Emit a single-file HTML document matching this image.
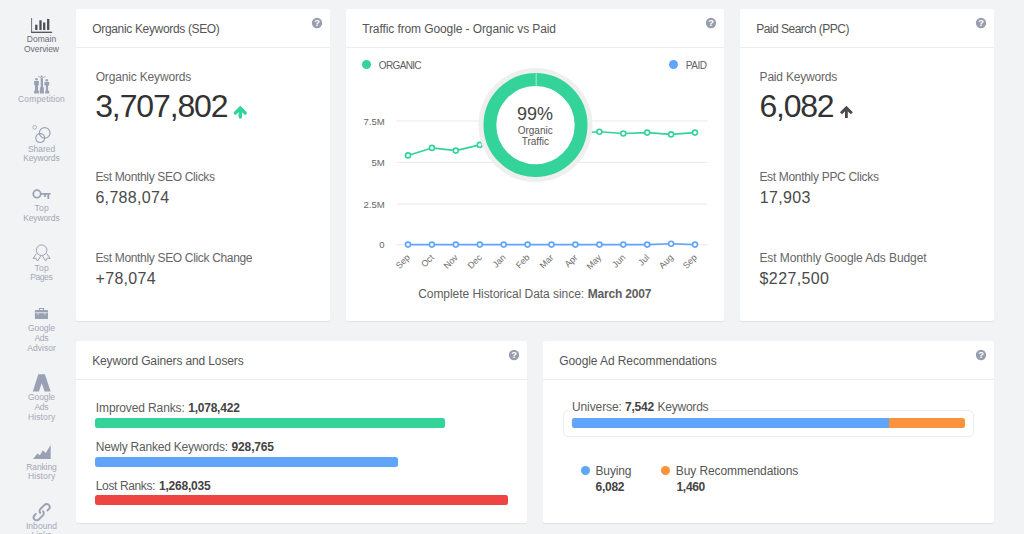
<!DOCTYPE html>
<html lang="en"><head><meta charset="utf-8"><title>Domain Overview</title>
<style>
html,body{margin:0;padding:0}
body{width:1024px;height:534px;overflow:hidden;position:relative;background:#f2f3f5;font-family:"Liberation Sans",sans-serif;}
.t{position:absolute;white-space:nowrap;line-height:1}
.card{position:absolute;background:#fff;border-radius:2px;box-shadow:0 1px 1px rgba(0,0,0,.07);margin:0}
.div{position:absolute;left:0;right:0;height:1px;background:#ececec}
.help{position:absolute}
.bar{position:absolute;height:10px;border-radius:2.5px}
.dot{position:absolute;width:9px;height:9px;border-radius:50%}
svg{position:absolute;overflow:visible}
nav{position:absolute;left:0;top:0;width:76px;height:534px}
</style></head><body>

<nav>

<svg id="ic1" style="left:30px;top:16px" width="24" height="18" viewBox="30 16 24 18"><path d="M31.6 18v14.3" fill="none" stroke="#6d717b" stroke-width="1"/><path d="M31.1 32.3h21" fill="none" stroke="#4b4f59" stroke-width="1.3"/><path d="M36.3 24.8v5.3M40.5 20.3v9.8M44.2 22.6v7.5M48.2 19v11.1" stroke="#4b4f59" stroke-width="2.3" fill="none"/></svg>
<svg id="ic2" style="left:32px;top:74px" width="20" height="20" viewBox="32 74 20 20"><g fill="#9ba1b4"><circle cx="36.5" cy="79.3" r="1.3"/><path d="M34.1 81h4.8v4.3h-.9v5.2h.9v3.1h-4.8v-3.1h.9v-5.2h-.9z"/><circle cx="41.7" cy="76.6" r="1.1"/><path d="M40.7 78.4h2.3v8.9h.9v6.3h-4.1v-6.3h.9z"/><path d="M38 76l3.7 2.6 3.9-2.4" fill="none" stroke="#9ba1b4" stroke-width="0.8"/><circle cx="46.8" cy="80.3" r="1.3"/><path d="M44.4 82h4.8v3.4h-1.1v5.3h1.1v2.9h-4v-2.9h.7v-5.3h-1.5z"/></g></svg>
<svg id="ic3" style="left:30px;top:124px" width="24" height="22" viewBox="30 124 24 22"><g fill="none" stroke="#9ba1b4" stroke-width="1.2"><circle cx="34.7" cy="127.3" r="1.9" stroke-width="0.8"/><circle cx="44.7" cy="132.9" r="5.3"/><circle cx="40.2" cy="138.1" r="4.4"/></g></svg>
<svg id="ic4" style="left:31px;top:186px" width="22" height="14" viewBox="31 186 22 14"><g fill="none" stroke="#9ba1b4" stroke-width="1.8"><circle cx="37" cy="193.9" r="3.7"/><path d="M40.6 193.9h9.9M45.1 193.9v3.2M48.3 193.9v5"/></g></svg>
<svg id="ic5" style="left:32px;top:244px" width="20" height="20" viewBox="32 244 20 20"><g fill="none" stroke="#9ba1b4" stroke-width="1" stroke-linejoin="round"><circle cx="41.6" cy="250.2" r="5.3"/><path d="M36.4 253.6l-3.3 4.8 2.9-.2 1.5 2.8 3.2-4.9M46.8 253.6l3.3 4.8-2.9-.2-1.5 2.8-3.2-4.9"/></g></svg>
<svg id="ic6" style="left:33px;top:307px" width="18" height="14" viewBox="33 307 18 14"><g fill="#9ba1b4"><path d="M38.9 310.2v-2.1h5.2v2.1h-1v-1.1h-3.2v1.1z"/><rect x="34.9" y="310" width="13.1" height="8.9" rx="0.6"/></g><path d="M35.2 312.7h12.5M38.1 312.7v1.9M44.9 312.7v1.9" stroke="#e6e8ee" stroke-width="0.9" fill="none"/></svg>
<svg id="ic7" style="left:32px;top:372px" width="20" height="20" viewBox="32 372 20 20"><path d="M38.3 374.3h6.6l5.8 17.3h-6.1l-2.9-8.4-2.8 8.4h-6.1z" fill="#9ba1b4"/></svg>
<svg id="ic8" style="left:32px;top:444px" width="20" height="16" viewBox="32 444 20 16"><path d="M33.1 459l4.2-5.5 2.6 1.8 2.9-5 2.9 2.7 5-7.9v13.9z" fill="#9ba1b4"/></svg>
<svg id="ic9" style="left:32px;top:502px" width="20" height="20" viewBox="32 502 20 20"><g fill="none" stroke="#9ba1b4" stroke-width="1.9"><path d="M-3 0.3V2.9A3 3 0 0 0 3 2.9V-2.9A3 3 0 0 0 -0.4 -5.87" transform="translate(38.7 515.3) rotate(45)"/><path d="M3 -0.3V-2.9A3 3 0 0 0 -3 -2.9V2.9A3 3 0 0 0 0.4 5.87" transform="translate(44.6 509.1) rotate(45)"/></g></svg>
<span class="t " style="left:26.8px;top:35px;font-size:8.5px;color:#686c76;letter-spacing:0.02px;">Domain</span>
<span class="t " style="left:24.0px;top:45px;font-size:8.5px;color:#686c76;letter-spacing:-0.06px;">Overview</span>
<span class="t " style="left:18.1px;top:95px;font-size:8.5px;color:#a3a8b5;letter-spacing:0.14px;">Competition</span>
<span class="t " style="left:27.9px;top:145px;font-size:8.5px;color:#a3a8b5;letter-spacing:-0.02px;">Shared</span>
<span class="t " style="left:23.2px;top:154px;font-size:8.5px;color:#a3a8b5;letter-spacing:-0.12px;">Keywords</span>
<span class="t " style="left:34.5px;top:204px;font-size:8.5px;color:#a3a8b5;letter-spacing:0.20px;">Top</span>
<span class="t " style="left:23.2px;top:214px;font-size:8.5px;color:#a3a8b5;letter-spacing:-0.12px;">Keywords</span>
<span class="t " style="left:34.5px;top:264px;font-size:8.5px;color:#a3a8b5;letter-spacing:0.20px;">Top</span>
<span class="t " style="left:30.2px;top:273px;font-size:8.5px;color:#a3a8b5;letter-spacing:-0.40px;">Pages</span>
<span class="t " style="left:28.1px;top:324px;font-size:8.5px;color:#a3a8b5;letter-spacing:-0.12px;">Google</span>
<span class="t " style="left:34.5px;top:334px;font-size:8.5px;color:#a3a8b5;letter-spacing:-0.37px;">Ads</span>
<span class="t " style="left:27.2px;top:344px;font-size:8.5px;color:#a3a8b5;letter-spacing:0.04px;">Advisor</span>
<span class="t " style="left:28.1px;top:393px;font-size:8.5px;color:#a3a8b5;letter-spacing:-0.12px;">Google</span>
<span class="t " style="left:34.5px;top:403px;font-size:8.5px;color:#a3a8b5;letter-spacing:-0.37px;">Ads</span>
<span class="t " style="left:27.9px;top:413px;font-size:8.5px;color:#a3a8b5;letter-spacing:0.14px;">History</span>
<span class="t " style="left:26.3px;top:463px;font-size:8.5px;color:#a3a8b5;letter-spacing:-0.13px;">Ranking</span>
<span class="t " style="left:27.9px;top:472px;font-size:8.5px;color:#a3a8b5;letter-spacing:0.14px;">History</span>
<span class="t " style="left:25.9px;top:522px;font-size:8.5px;color:#a3a8b5;letter-spacing:0.06px;">Inbound</span>
<span class="t " style="left:31.6px;top:531px;font-size:8.5px;color:#a3a8b5;letter-spacing:0.00px;">Links</span>
</nav>

<section class="card" style="left:76px;top:9px;width:254px;height:312px"><div class="div" style="top:38px"></div></section>
<span class="t " style="left:92.3px;top:23px;font-size:12px;color:#555;letter-spacing:-0.34px;">Organic Keywords (SEO)</span>
<svg class="help" style="left:311.5px;top:17.8px" width="10" height="10" viewBox="0 0 10 10"><circle cx="5" cy="5" r="5.15" fill="#979dad"/><text x="5" y="8.4" text-anchor="middle" font-family="Liberation Sans, sans-serif" font-weight="bold" font-size="9.4" fill="#fff">?</text></svg>
<span class="t " style="left:95.7px;top:71px;font-size:12px;color:#666;letter-spacing:-0.16px;">Organic Keywords</span>
<span class="t " style="left:95.2px;top:90px;font-size:32px;color:#333;letter-spacing:-1.12px;">3,707,802</span>
<svg style="left:0;top:0" width="1024" height="534" viewBox="0 0 1024 534"><path d="M235.4 113l4.9-4.9 4.9 4.9" fill="none" stroke="#34d399" stroke-width="3.3" stroke-linecap="round" stroke-linejoin="miter"/><path d="M240.3 108.6V117" fill="none" stroke="#34d399" stroke-width="3.5" stroke-linecap="round"/></svg>
<span class="t " style="left:95.4px;top:171px;font-size:12px;color:#666;letter-spacing:-0.34px;">Est Monthly SEO Clicks</span>
<span class="t " style="left:95.4px;top:190px;font-size:16px;color:#4a4a4a;letter-spacing:0.33px;">6,788,074</span>
<span class="t " style="left:95.4px;top:252px;font-size:12px;color:#666;letter-spacing:-0.33px;">Est Monthly SEO Click Change</span>
<span class="t " style="left:95.6px;top:271px;font-size:16px;color:#4a4a4a;letter-spacing:0.29px;">+78,074</span>
<section class="card" style="left:346px;top:9px;width:378.4px;height:312px"><div class="div" style="top:38px"></div></section>
<span class="t " style="left:362.2px;top:23px;font-size:12px;color:#555;letter-spacing:-0.10px;">Traffic from Google - Organic vs Paid</span>
<svg class="help" style="left:705.6px;top:17.8px" width="10" height="10" viewBox="0 0 10 10"><circle cx="5" cy="5" r="5.15" fill="#979dad"/><text x="5" y="8.4" text-anchor="middle" font-family="Liberation Sans, sans-serif" font-weight="bold" font-size="9.4" fill="#fff">?</text></svg>
<i class="dot" style="left:362.1px;top:60.4px;background:#34d399"></i>
<span class="t " style="left:378.8px;top:61px;font-size:10px;color:#5e5e5e;letter-spacing:-0.65px;">ORGANIC</span>
<i class="dot" style="left:668.7px;top:60.4px;background:#60a5fa"></i>
<span class="t " style="left:685.8px;top:61px;font-size:10px;color:#5e5e5e;letter-spacing:-0.47px;">PAID</span>
<svg style="left:0;top:0" width="1024" height="534" viewBox="0 0 1024 534" font-family="Liberation Sans, sans-serif">
<path d="M396.5 121H707.5" stroke="#e9e9e9" stroke-width="1"/>
<path d="M396.5 162.4H707.5" stroke="#e9e9e9" stroke-width="1"/>
<path d="M396.5 204.2H707.5" stroke="#e9e9e9" stroke-width="1"/>
<path d="M396.5 244.7H707.5" stroke="#e9e9e9" stroke-width="1"/>
<text x="384.6" y="124.6" text-anchor="end" font-size="9.5" fill="#666">7.5M</text>
<text x="384.6" y="166.0" text-anchor="end" font-size="9.5" fill="#666">5M</text>
<text x="384.6" y="207.79999999999998" text-anchor="end" font-size="9.5" fill="#666">2.5M</text>
<text x="384.6" y="248.29999999999998" text-anchor="end" font-size="9.5" fill="#666">0</text>
<polyline points="408.0,155.4 431.9,147.9 455.8,150.6 479.8,144.9 503.7,140.0 527.6,137.0 551.5,135.0 575.4,133.0 599.4,131.7 623.3,133.5 647.2,132.6 671.1,134.4 695.0,132.6" fill="none" stroke="#34d399" stroke-width="1.6" stroke-linejoin="round"/><circle cx="408.0" cy="155.4" r="2.5" fill="#fff" stroke="#34d399" stroke-width="1.6"/><circle cx="431.9" cy="147.9" r="2.5" fill="#fff" stroke="#34d399" stroke-width="1.6"/><circle cx="455.8" cy="150.6" r="2.5" fill="#fff" stroke="#34d399" stroke-width="1.6"/><circle cx="479.8" cy="144.9" r="2.5" fill="#fff" stroke="#34d399" stroke-width="1.6"/><circle cx="503.7" cy="140.0" r="2.5" fill="#fff" stroke="#34d399" stroke-width="1.6"/><circle cx="527.6" cy="137.0" r="2.5" fill="#fff" stroke="#34d399" stroke-width="1.6"/><circle cx="551.5" cy="135.0" r="2.5" fill="#fff" stroke="#34d399" stroke-width="1.6"/><circle cx="575.4" cy="133.0" r="2.5" fill="#fff" stroke="#34d399" stroke-width="1.6"/><circle cx="599.4" cy="131.7" r="2.5" fill="#fff" stroke="#34d399" stroke-width="1.6"/><circle cx="623.3" cy="133.5" r="2.5" fill="#fff" stroke="#34d399" stroke-width="1.6"/><circle cx="647.2" cy="132.6" r="2.5" fill="#fff" stroke="#34d399" stroke-width="1.6"/><circle cx="671.1" cy="134.4" r="2.5" fill="#fff" stroke="#34d399" stroke-width="1.6"/><circle cx="695.0" cy="132.6" r="2.5" fill="#fff" stroke="#34d399" stroke-width="1.6"/>
<polyline points="408.0,244.6 431.9,244.6 455.8,244.6 479.8,244.6 503.7,244.6 527.6,244.6 551.5,244.6 575.4,244.6 599.4,244.6 623.3,244.6 647.2,244.6 671.1,243.7 695.0,244.6" fill="none" stroke="#60a5fa" stroke-width="1.6" stroke-linejoin="round"/><circle cx="408.0" cy="244.6" r="2.5" fill="#fff" stroke="#60a5fa" stroke-width="1.6"/><circle cx="431.9" cy="244.6" r="2.5" fill="#fff" stroke="#60a5fa" stroke-width="1.6"/><circle cx="455.8" cy="244.6" r="2.5" fill="#fff" stroke="#60a5fa" stroke-width="1.6"/><circle cx="479.8" cy="244.6" r="2.5" fill="#fff" stroke="#60a5fa" stroke-width="1.6"/><circle cx="503.7" cy="244.6" r="2.5" fill="#fff" stroke="#60a5fa" stroke-width="1.6"/><circle cx="527.6" cy="244.6" r="2.5" fill="#fff" stroke="#60a5fa" stroke-width="1.6"/><circle cx="551.5" cy="244.6" r="2.5" fill="#fff" stroke="#60a5fa" stroke-width="1.6"/><circle cx="575.4" cy="244.6" r="2.5" fill="#fff" stroke="#60a5fa" stroke-width="1.6"/><circle cx="599.4" cy="244.6" r="2.5" fill="#fff" stroke="#60a5fa" stroke-width="1.6"/><circle cx="623.3" cy="244.6" r="2.5" fill="#fff" stroke="#60a5fa" stroke-width="1.6"/><circle cx="647.2" cy="244.6" r="2.5" fill="#fff" stroke="#60a5fa" stroke-width="1.6"/><circle cx="671.1" cy="243.7" r="2.5" fill="#fff" stroke="#60a5fa" stroke-width="1.6"/><circle cx="695.0" cy="244.6" r="2.5" fill="#fff" stroke="#60a5fa" stroke-width="1.6"/>
<text transform="translate(410.6 258.1) rotate(-45)" text-anchor="end" font-size="8.9" fill="#6e6e6e">Sep</text>
<text transform="translate(434.5 258.1) rotate(-45)" text-anchor="end" font-size="8.9" fill="#6e6e6e">Oct</text>
<text transform="translate(458.4 258.1) rotate(-45)" text-anchor="end" font-size="8.9" fill="#6e6e6e">Nov</text>
<text transform="translate(482.4 258.1) rotate(-45)" text-anchor="end" font-size="8.9" fill="#6e6e6e">Dec</text>
<text transform="translate(506.3 258.1) rotate(-45)" text-anchor="end" font-size="8.9" fill="#6e6e6e">Jan</text>
<text transform="translate(530.2 258.1) rotate(-45)" text-anchor="end" font-size="8.9" fill="#6e6e6e">Feb</text>
<text transform="translate(554.1 258.1) rotate(-45)" text-anchor="end" font-size="8.9" fill="#6e6e6e">Mar</text>
<text transform="translate(578.0 258.1) rotate(-45)" text-anchor="end" font-size="8.9" fill="#6e6e6e">Apr</text>
<text transform="translate(602.0 258.1) rotate(-45)" text-anchor="end" font-size="8.9" fill="#6e6e6e">May</text>
<text transform="translate(625.9 258.1) rotate(-45)" text-anchor="end" font-size="8.9" fill="#6e6e6e">Jun</text>
<text transform="translate(649.8 258.1) rotate(-45)" text-anchor="end" font-size="8.9" fill="#6e6e6e">Jul</text>
<text transform="translate(673.7 258.1) rotate(-45)" text-anchor="end" font-size="8.9" fill="#6e6e6e">Aug</text>
<text transform="translate(697.6 258.1) rotate(-45)" text-anchor="end" font-size="8.9" fill="#6e6e6e">Sep</text>
<circle cx="535.5" cy="125.1" r="57" fill="#efefef"/>
<circle cx="535.5" cy="125.1" r="45.6" fill="#fff" stroke="#34d399" stroke-width="12.8"/>
<path d="M536.2 73.2v12.6" stroke="#c9f1e2" stroke-width="0.8"/>
<text x="535" y="120.1" text-anchor="middle" font-size="18" fill="#444">99%</text>
<text x="535.2" y="133.8" text-anchor="middle" font-size="10" fill="#555">Organic</text>
<text x="535.3" y="144.7" text-anchor="middle" font-size="10" fill="#555">Traffic</text>
</svg>
<span class="t " style="left:418.2px;top:288px;font-size:12px;color:#606060;letter-spacing:-0.05px;">Complete Historical Data since:</span>
<span class="t " style="left:587.8px;top:288px;font-size:12px;color:#606060;letter-spacing:-0.20px;font-weight:bold;">March 2007</span>
<section class="card" style="left:740px;top:9px;width:254px;height:312px"><div class="div" style="top:38px"></div></section>
<span class="t " style="left:756.2px;top:23px;font-size:12px;color:#555;letter-spacing:-0.51px;">Paid Search (PPC)</span>
<svg class="help" style="left:976px;top:17.8px" width="10" height="10" viewBox="0 0 10 10"><circle cx="5" cy="5" r="5.15" fill="#979dad"/><text x="5" y="8.4" text-anchor="middle" font-family="Liberation Sans, sans-serif" font-weight="bold" font-size="9.4" fill="#fff">?</text></svg>
<span class="t " style="left:759.6px;top:71px;font-size:12px;color:#666;letter-spacing:-0.20px;">Paid Keywords</span>
<span class="t " style="left:759.6px;top:90px;font-size:32px;color:#333;letter-spacing:-1.27px;">6,082</span>
<svg style="left:0;top:0" width="1024" height="534" viewBox="0 0 1024 534"><path d="M841 113.3l5.4-5.4 5.4 5.4" fill="none" stroke="#4a4a4a" stroke-width="3" stroke-linejoin="miter"/><path d="M846.4 108.5V118" fill="none" stroke="#4a4a4a" stroke-width="2.8"/></svg>
<span class="t " style="left:759.4px;top:171px;font-size:12px;color:#666;letter-spacing:-0.31px;">Est Monthly PPC Clicks</span>
<span class="t " style="left:759.8px;top:190px;font-size:16px;color:#4a4a4a;letter-spacing:0.33px;">17,903</span>
<span class="t " style="left:759.4px;top:252px;font-size:12px;color:#666;letter-spacing:-0.08px;">Est Monthly Google Ads Budget</span>
<span class="t " style="left:759.6px;top:271px;font-size:16px;color:#4a4a4a;letter-spacing:0.38px;">$227,500</span>
<section class="card" style="left:76px;top:341px;width:451.3px;height:182.4px"><div class="div" style="top:38px"></div></section>
<span class="t " style="left:92.2px;top:355px;font-size:12px;color:#555;letter-spacing:-0.13px;">Keyword Gainers and Losers</span>
<svg class="help" style="left:508.79999999999995px;top:349.6px" width="10" height="10" viewBox="0 0 10 10"><circle cx="5" cy="5" r="5.15" fill="#979dad"/><text x="5" y="8.4" text-anchor="middle" font-family="Liberation Sans, sans-serif" font-weight="bold" font-size="9.4" fill="#fff">?</text></svg>
<span class="t " style="left:95.8px;top:402px;font-size:12px;color:#5c5c5c;letter-spacing:-0.12px;">Improved Ranks:</span>
<span class="t " style="left:188.2px;top:402px;font-size:12px;color:#444;letter-spacing:-0.22px;font-weight:bold;">1,078,422</span>
<i class="bar" style="left:95.2px;top:418.3px;width:350.2px;background:#34d399"></i>
<span class="t " style="left:95.8px;top:441px;font-size:12px;color:#5c5c5c;letter-spacing:-0.21px;">Newly Ranked Keywords:</span>
<span class="t " style="left:231.6px;top:441px;font-size:12px;color:#444;letter-spacing:-0.16px;font-weight:bold;">928,765</span>
<i class="bar" style="left:95.2px;top:456.7px;width:302.4px;background:#60a5fa"></i>
<span class="t " style="left:95.8px;top:480px;font-size:12px;color:#5c5c5c;letter-spacing:-0.38px;">Lost Ranks:</span>
<span class="t " style="left:159.0px;top:480px;font-size:12px;color:#444;letter-spacing:-0.22px;font-weight:bold;">1,268,035</span>
<i class="bar" style="left:95.2px;top:495.2px;width:412.6px;background:#ef4444"></i>
<section class="card" style="left:543.4px;top:341px;width:450.6px;height:182.4px"><div class="div" style="top:38px"></div></section>
<span class="t " style="left:559.2px;top:355px;font-size:12px;color:#555;letter-spacing:-0.08px;">Google Ad Recommendations</span>
<svg class="help" style="left:976px;top:349.6px" width="10" height="10" viewBox="0 0 10 10"><circle cx="5" cy="5" r="5.15" fill="#979dad"/><text x="5" y="8.4" text-anchor="middle" font-family="Liberation Sans, sans-serif" font-weight="bold" font-size="9.4" fill="#fff">?</text></svg>
<div style="position:absolute;left:563px;top:410px;width:408.8px;height:24.6px;border:1px solid #ececec;border-radius:5px;box-sizing:content-box"></div>
<div style="position:absolute;left:569px;top:400px;width:142px;height:14px;background:#fff"></div>
<span class="t " style="left:572.0px;top:401px;font-size:12px;color:#5c5c5c;letter-spacing:-0.11px;">Universe:</span>
<span class="t " style="left:625.0px;top:401px;font-size:12px;color:#444;letter-spacing:-0.21px;font-weight:bold;">7,542</span>
<span class="t " style="left:657.4px;top:401px;font-size:12px;color:#5c5c5c;letter-spacing:-0.21px;">Keywords</span>
<i class="bar" style="left:571.6px;top:418.1px;width:393.4px;background:#fb923c"></i>
<i class="bar" style="left:571.6px;top:418.1px;width:317.6px;background:#60a5fa;border-radius:3px 0 0 3px"></i>
<i class="dot" style="left:581px;top:465.8px;width:9.4px;height:9.4px;background:#60a5fa"></i>
<span class="t " style="left:595.5px;top:465px;font-size:12px;color:#555;letter-spacing:-0.14px;">Buying</span>
<span class="t " style="left:595.5px;top:481px;font-size:12px;color:#444;letter-spacing:-0.26px;font-weight:bold;">6,082</span>
<i class="dot" style="left:660.8px;top:465.8px;width:9.4px;height:9.4px;background:#fb923c"></i>
<span class="t " style="left:675.8px;top:465px;font-size:12px;color:#555;letter-spacing:-0.09px;">Buy Recommendations</span>
<span class="t " style="left:676.5px;top:481px;font-size:12px;color:#444;letter-spacing:-0.31px;font-weight:bold;">1,460</span>
</body></html>
